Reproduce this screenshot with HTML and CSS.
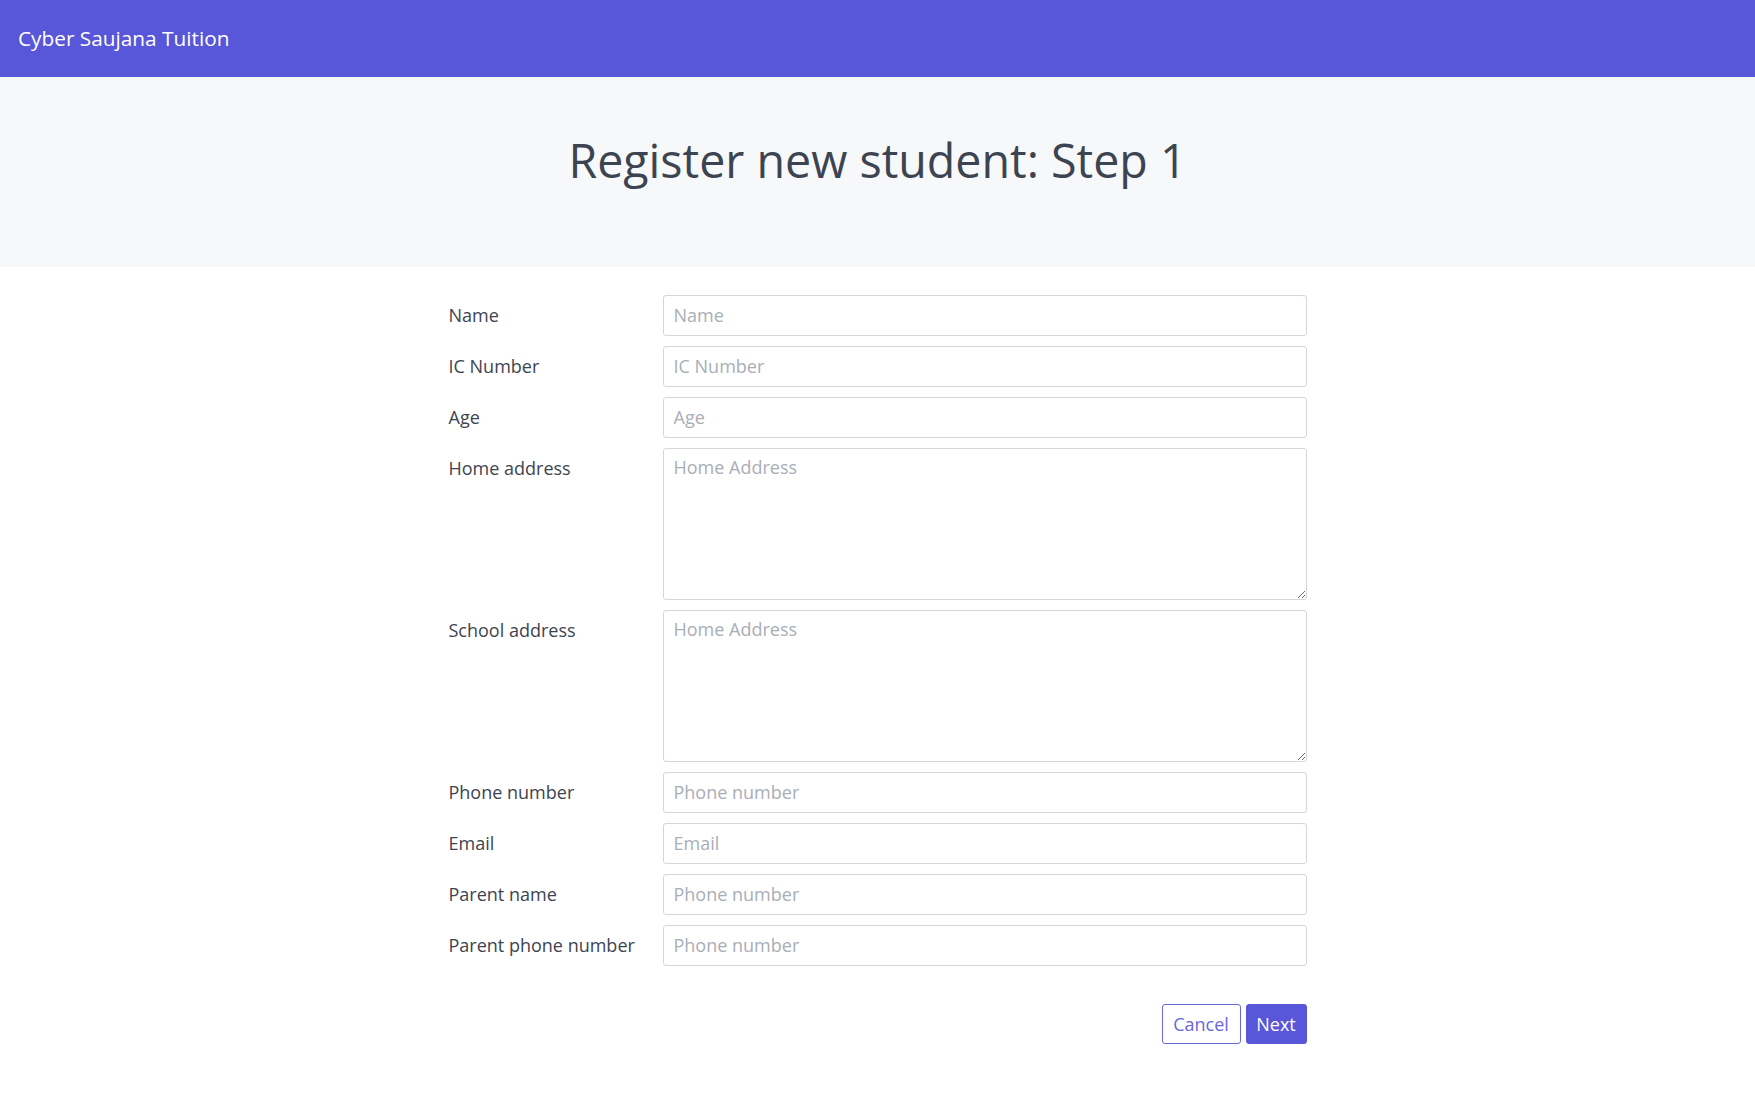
FILE: index.html
```html
<!DOCTYPE html>
<html lang="en">
<head>
<meta charset="utf-8">
<title>Register new student</title>
<link rel="stylesheet" href="styles.css">
</head>
<body>
<nav class="navbar"><span class="brand">Cyber Saujana Tuition</span></nav>
<header class="hero"><h1 class="hero-title">Register new student: Step 1</h1></header>
<main class="page">
  <form class="reg-form">
    <label class="field-label" for="f-name">Name</label>
    <input class="field-input" id="f-name" type="text" placeholder="Name">

    <label class="field-label" for="f-ic">IC Number</label>
    <input class="field-input" id="f-ic" type="text" placeholder="IC Number">

    <label class="field-label" for="f-age">Age</label>
    <input class="field-input" id="f-age" type="text" placeholder="Age">

    <label class="field-label" for="f-home">Home address</label>
    <textarea class="field-input field-area" id="f-home" placeholder="Home Address"></textarea>

    <label class="field-label" for="f-school">School address</label>
    <textarea class="field-input field-area" id="f-school" placeholder="Home Address"></textarea>

    <label class="field-label" for="f-phone">Phone number</label>
    <input class="field-input" id="f-phone" type="text" placeholder="Phone number">

    <label class="field-label" for="f-email">Email</label>
    <input class="field-input" id="f-email" type="text" placeholder="Email">

    <label class="field-label" for="f-parent">Parent name</label>
    <input class="field-input" id="f-parent" type="text" placeholder="Phone number">

    <label class="field-label" for="f-pphone">Parent phone number</label>
    <input class="field-input" id="f-pphone" type="text" placeholder="Phone number">

    <div class="actions">
      <button type="button" class="btn btn-outline">Cancel</button>
      <button type="button" class="btn btn-primary">Next</button>
    </div>
  </form>
</main>
</body>
</html>
```

FILE: styles.css
```css
* { box-sizing: border-box; }

body {
  margin: 0;
  background: #ffffff;
  font-family: "Open Sans", "Noto Sans", sans-serif;
  color: #3d4451;
}

.navbar {
  height: 77px;
  background: #5856d9;
  display: flex;
  align-items: center;
  padding-left: 18px;
  padding-bottom: 2px;
}

.brand {
  color: #ffffff;
  font-size: 20.8px;
}

.hero {
  height: 190px;
  background: #f7f8fa;
  display: flex;
  justify-content: center;
  padding-top: 53px;
}

.hero-title {
  margin: 0;
  font-weight: 400;
  font-size: 46.6px;
  line-height: 60px;
  color: #3d4451;
}

.page {
  display: flex;
  justify-content: center;
  padding-top: 28px;
}

.reg-form {
  width: 858px;
  display: grid;
  grid-template-columns: 214px 1fr;
  row-gap: 10px;
}

.field-label {
  font-size: 18px;
  line-height: 24px;
  padding-top: 8px;
  color: #3d4451;
}

.field-input {
  height: 41px;
  border: 1px solid #d3d6db;
  border-radius: 3px;
  padding: 6px 10px 8px;
  font-family: inherit;
  font-size: 18px;
  line-height: 24px;
  color: #3d4451;
  background: #fff;
  outline: none;
}

.field-input::placeholder {
  color: #a9aeb7;
}

.field-area {
  height: 152px;
  resize: vertical;
}

.actions {
  grid-column: 1 / -1;
  display: flex;
  justify-content: flex-end;
  gap: 5px;
  margin-top: 28px;
}

.btn {
  height: 40px;
  border-radius: 3px;
  font-family: inherit;
  font-size: 18px;
  padding: 0 8px;
  cursor: pointer;
}

.btn-outline {
  background: #fff;
  border: 1px solid #6b67dc;
  color: #6b67dc;
  width: 79px;
}

.btn-primary {
  background: #5856d9;
  border: 1px solid #5856d9;
  color: #fff;
  width: 61px;
}
```
